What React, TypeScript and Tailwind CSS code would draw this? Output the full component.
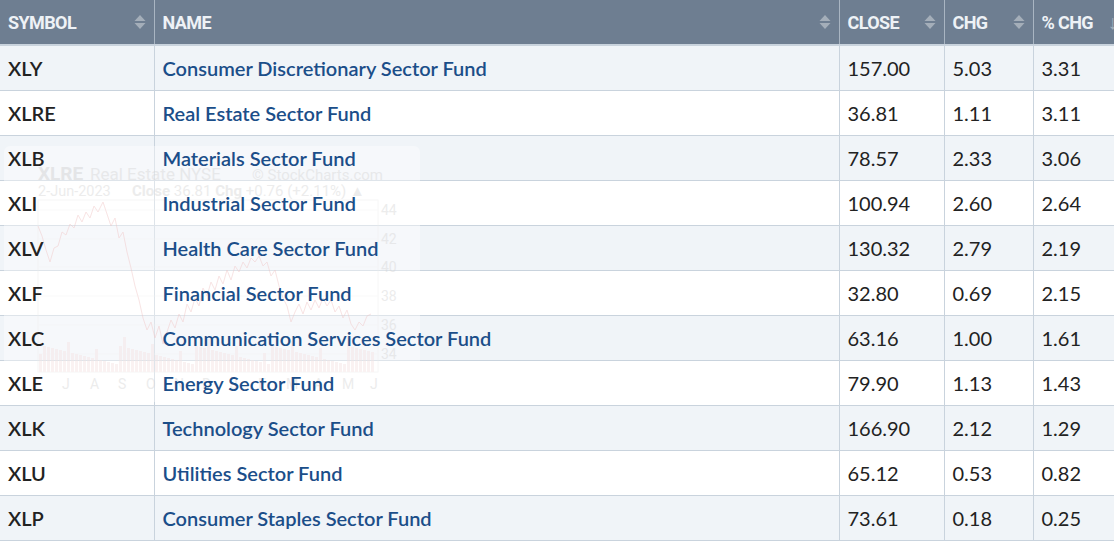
import React from "react";

type Row = { sym: string; name: string; close: string; chg: string; pct: string };

const rows: Row[] = [
  { sym: "XLY", name: "Consumer Discretionary Sector Fund", close: "157.00", chg: "5.03", pct: "3.31" },
  { sym: "XLRE", name: "Real Estate Sector Fund", close: "36.81", chg: "1.11", pct: "3.11" },
  { sym: "XLB", name: "Materials Sector Fund", close: "78.57", chg: "2.33", pct: "3.06" },
  { sym: "XLI", name: "Industrial Sector Fund", close: "100.94", chg: "2.60", pct: "2.64" },
  { sym: "XLV", name: "Health Care Sector Fund", close: "130.32", chg: "2.79", pct: "2.19" },
  { sym: "XLF", name: "Financial Sector Fund", close: "32.80", chg: "0.69", pct: "2.15" },
  { sym: "XLC", name: "Communication Services Sector Fund", close: "63.16", chg: "1.00", pct: "1.61" },
  { sym: "XLE", name: "Energy Sector Fund", close: "79.90", chg: "1.13", pct: "1.43" },
  { sym: "XLK", name: "Technology Sector Fund", close: "166.90", chg: "2.12", pct: "1.29" },
  { sym: "XLU", name: "Utilities Sector Fund", close: "65.12", chg: "0.53", pct: "0.82" },
  { sym: "XLP", name: "Consumer Staples Sector Fund", close: "73.61", chg: "0.18", pct: "0.25" },
];

const SortIcon = () => (
  <svg width="12" height="16" viewBox="0 0 12 16" className="shrink-0">
    <path d="M6 1 L11.5 7 H0.5 Z" fill="#a4aeb9" />
    <path d="M6 15 L11.5 9 H0.5 Z" fill="#a4aeb9" />
  </svg>
);

const Header = ({ label, sort = "both" }: { label: string; sort?: "both" | "down" }) => (
  <th className="h-[45px] border-r border-[#a9b5c2] px-2 text-left align-middle">
    <div className="flex items-center justify-between">
      <span className="font-['Roboto',sans-serif] text-[18px] font-bold tracking-[-0.6px] text-[#eef2f6]">
        {label}
      </span>
      {sort === "both" ? (
        <SortIcon />
      ) : (
        <span className="font-['Roboto',sans-serif] text-[20px] font-bold text-[#a4aeb9]">↓</span>
      )}
    </div>
  </th>
);

// faint price chart popup left over from a hover
const price = [
  [38, 226], [42, 236], [46, 250], [50, 262], [54, 248], [58, 246], [62, 232], [66, 235],
  [70, 224], [74, 228], [78, 215], [82, 222], [86, 212], [90, 218], [94, 206], [98, 212],
  [103, 202], [107, 214], [111, 226], [115, 218], [119, 238], [123, 232], [127, 252],
  [131, 268], [135, 286], [139, 300], [143, 318], [147, 330], [151, 322], [155, 338],
  [159, 326], [163, 344], [167, 332], [171, 320], [175, 328], [179, 314], [183, 322],
  [187, 304], [191, 312], [195, 298], [199, 306], [203, 288], [207, 296], [211, 282],
  [215, 290], [219, 276], [223, 284], [227, 270], [231, 280], [235, 266], [239, 272],
  [243, 262], [247, 268], [251, 258], [255, 262], [259, 256], [263, 266], [267, 262],
  [271, 276], [275, 270], [279, 286], [283, 298], [287, 306], [291, 322], [295, 312],
  [299, 304], [303, 314], [307, 302], [311, 310], [315, 300], [319, 308], [323, 298],
  [327, 306], [331, 300], [335, 312], [339, 306], [343, 318], [347, 310], [351, 324],
  [355, 330], [359, 322], [363, 326], [367, 316], [371, 314],
];

const ChartGhost = () => (
  <div className="pointer-events-none absolute left-[4px] top-[146px] z-0 h-[256px] w-[416px] rounded-md bg-white/40">
    <svg width="416" height="256" viewBox="4 146 416 256" className="opacity-45">
      <text x="38" y="180" fontFamily="Roboto, sans-serif" fontWeight="700" fontSize="19" fill="#cfcfcf">XLRE</text>
      <text x="90" y="180" fontFamily="Roboto, sans-serif" fontSize="17" fill="#d6d6d6">Real Estate  NYSE</text>
      <text x="252" y="180" fontFamily="Roboto, sans-serif" fontSize="15" fill="#d6d6d6">© StockCharts.com</text>
      <text x="38" y="196" fontFamily="Roboto, sans-serif" fontSize="14.5" fill="#d6d6d6">2-Jun-2023</text>
      <text x="132" y="196" fontFamily="Roboto, sans-serif" fontSize="15" fill="#d6d6d6">
        <tspan fontWeight="700">Close</tspan> 36.81 <tspan fontWeight="700">Chg</tspan> +0.76 (+2.11%) ▲
      </text>
      <rect x="38" y="200" width="340" height="172" fill="none" stroke="#eeeeee" />
      {[210, 239, 267, 296, 325, 354].map((y) => (
        <line key={y} x1="38" x2="378" y1={y} y2={y} stroke="#f3f3f3" />
      ))}
      {[44, 42, 40, 38, 36, 34].map((v, i) => (
        <text key={v} x="381" y={[215, 244, 272, 301, 330, 359][i]} fontFamily="Roboto, sans-serif" fontSize="14" fill="#d6d6d6">
          {v}
        </text>
      ))}
      {Array.from({ length: 84 }).map((_, i) => {
        const h = 8 + ((i * 37) % 19) + (i % 7 === 0 ? 10 : 0);
        return <rect key={i} x={39 + i * 4} y={372 - h} width="3" height={h} fill="#f4e4e4" />;
      })}
      <polyline points={price.map((p) => p.join(",")).join(" ")} fill="none" stroke="#f1c4c4" strokeWidth="1" />
      {["J", "A", "S", "O", "N", "D", "J", "F", "M", "A", "M", "J"].map((m, i) => (
        <text key={i} x={62 + i * 28} y="389" fontFamily="Roboto, sans-serif" fontSize="14" fill="#d6d6d6">
          {m}
        </text>
      ))}
    </svg>
  </div>
);

export default function App() {
  return (
    <div className="relative h-[543px] w-[1114px] overflow-hidden bg-white font-['Lato',sans-serif]">
      <table className="w-[1126px] table-fixed border-collapse">
        <colgroup>
          <col className="w-[154px]" />
          <col className="w-[685px]" />
          <col className="w-[105px]" />
          <col className="w-[89px]" />
          <col className="w-[93px]" />
        </colgroup>
        <thead>
          <tr className="border-b-2 border-[#c9d3dd] bg-[#6e7e91]">
            <Header label="SYMBOL" />
            <Header label="NAME" />
            <Header label="CLOSE" />
            <Header label="CHG" />
            <Header label="% CHG" sort="down" />
          </tr>
        </thead>
        <tbody>
          {rows.map((r, i) => (
            <tr key={r.sym} className={`h-[45px] border-b border-[#c9d3dd] ${i % 2 === 0 ? "bg-[#f0f4f8]" : "bg-white"}`}>
              <td className="border-r border-[#c9d3dd] px-2">
                <span className="relative z-10 text-[20px] font-semibold text-[#222]">{r.sym}</span>
              </td>
              <td className="border-r border-[#c9d3dd] px-2">
                <span className="relative z-10 text-[20px] font-semibold text-[#1b4e89]">{r.name}</span>
              </td>
              <td className="border-r border-[#c9d3dd] px-2">
                <span className="relative z-10 text-[20px] text-[#222]">{r.close}</span>
              </td>
              <td className="border-r border-[#c9d3dd] px-2">
                <span className="relative z-10 text-[20px] text-[#222]">{r.chg}</span>
              </td>
              <td className="px-2">
                <span className="relative z-10 text-[20px] text-[#222]">{r.pct}</span>
              </td>
            </tr>
          ))}
        </tbody>
      </table>
      <ChartGhost />
    </div>
  );
}
